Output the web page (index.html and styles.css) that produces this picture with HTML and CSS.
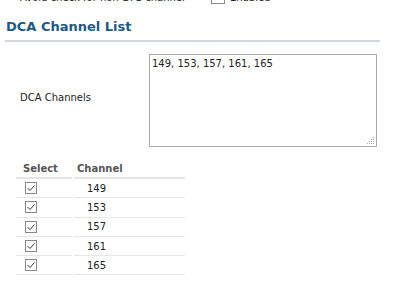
FILE: index.html
```html
<!DOCTYPE html>
<html lang="en">

<head>
    <meta charset="UTF-8">
    <meta name="viewport" content="width=device-width, initial-scale=1.0">
    <title>DCA Channel List</title>
    <link rel="stylesheet" href="styles.css">
</head>

<body>
    <div class="prev-row">
        <span class="prev-label">Avoid check for non-DFS channel</span>
        <label class="prev-check"><span class="box"></span>Enabled</label>
    </div>

    <h2 class="section-title">DCA Channel List</h2>

    <div class="form-row">
        <label class="form-label" for="dca-channels">DCA Channels</label>
        <textarea id="dca-channels" class="channels-input">149, 153, 157, 161, 165</textarea>
    </div>

    <table class="channel-table">
        <thead>
            <tr>
                <th class="col-select">Select</th>
                <th class="col-channel">Channel</th>
            </tr>
        </thead>
        <tbody>
            <tr>
                <td class="col-select"><svg class="check" viewBox="0 0 12 12"><rect x="0.5" y="0.5" width="11" height="11" fill="#fff" stroke="#888"/><path d="M2.5 6 L5 8.5 L9.5 3.5" fill="none" stroke="#333" stroke-width="1"/></svg></td>
                <td class="col-channel">149</td>
            </tr>
            <tr>
                <td class="col-select"><svg class="check" viewBox="0 0 12 12"><rect x="0.5" y="0.5" width="11" height="11" fill="#fff" stroke="#888"/><path d="M2.5 6 L5 8.5 L9.5 3.5" fill="none" stroke="#333" stroke-width="1"/></svg></td>
                <td class="col-channel">153</td>
            </tr>
            <tr>
                <td class="col-select"><svg class="check" viewBox="0 0 12 12"><rect x="0.5" y="0.5" width="11" height="11" fill="#fff" stroke="#888"/><path d="M2.5 6 L5 8.5 L9.5 3.5" fill="none" stroke="#333" stroke-width="1"/></svg></td>
                <td class="col-channel">157</td>
            </tr>
            <tr>
                <td class="col-select"><svg class="check" viewBox="0 0 12 12"><rect x="0.5" y="0.5" width="11" height="11" fill="#fff" stroke="#888"/><path d="M2.5 6 L5 8.5 L9.5 3.5" fill="none" stroke="#333" stroke-width="1"/></svg></td>
                <td class="col-channel">161</td>
            </tr>
            <tr>
                <td class="col-select"><svg class="check" viewBox="0 0 12 12"><rect x="0.5" y="0.5" width="11" height="11" fill="#fff" stroke="#888"/><path d="M2.5 6 L5 8.5 L9.5 3.5" fill="none" stroke="#333" stroke-width="1"/></svg></td>
                <td class="col-channel">165</td>
            </tr>
        </tbody>
    </table>
</body>

</html>
```

FILE: styles.css
```css
body {
    margin: 0;
    font-family: "DejaVu Sans", Verdana, sans-serif;
    font-size: 10px;
    color: #222;
    background-color: #fff;
}

.prev-row {
    display: flex;
    align-items: center;
    height: 14px;
    margin-top: -10px;
    padding-left: 20px;
}

.prev-label {
    width: 191px;
}

.prev-check {
    display: flex;
    align-items: center;
}

.prev-check .box {
    width: 12px;
    height: 11px;
    border: 1px solid #888;
    margin-right: 5px;
}

.section-title {
    margin: 15px 19px 0 5px;
    padding: 0 0 6px 1px;
    font-size: 13px;
    font-weight: bold;
    color: #1d5987;
    border-bottom: 2px solid #d3d7de;
}

.form-row {
    display: flex;
    align-items: center;
    margin-top: 12px;
    padding-left: 20px;
}

.form-label {
    width: 129px;
    margin-bottom: 7px;
}

.channels-input {
    box-sizing: border-box;
    width: 228px;
    height: 93px;
    margin: 0;
    padding: 3px 2px;
    border: 1px solid #a9a9a9;
    font-family: "DejaVu Sans", Verdana, sans-serif;
    font-size: 10px;
    color: #222;
    resize: none;
    background: #fff url("data:image/svg+xml,%3Csvg xmlns='http://www.w3.org/2000/svg' width='9' height='9'%3E%3Cg fill='%23aaa'%3E%3Crect x='7' y='1' width='1' height='1'/%3E%3Crect x='5' y='3' width='1' height='1'/%3E%3Crect x='7' y='3' width='1' height='1'/%3E%3Crect x='3' y='5' width='1' height='1'/%3E%3Crect x='5' y='5' width='1' height='1'/%3E%3Crect x='7' y='5' width='1' height='1'/%3E%3Crect x='1' y='7' width='1' height='1'/%3E%3Crect x='3' y='7' width='1' height='1'/%3E%3Crect x='5' y='7' width='1' height='1'/%3E%3Crect x='7' y='7' width='1' height='1'/%3E%3C/g%3E%3C/svg%3E") no-repeat right 1px bottom 1px;
}

.channel-table {
    margin: 13px 0 0 14px;
    border-spacing: 2px 0;
}

.channel-table th {
    height: 19px;
    padding: 0 0 0 7px;
    text-align: left;
    font-weight: bold;
    color: #555;
    border-bottom: 2px solid #e3e5e8;
}

.channel-table td {
    height: 19.3px;
    padding: 0;
    border-bottom: 1px solid #e6e6e6;
}

.channel-table .col-select {
    box-sizing: border-box;
    width: 56px;
}

.channel-table td.col-select {
    padding-left: 9px;
}

.channel-table .col-channel {
    box-sizing: border-box;
    width: 111px;
}

.channel-table th.col-channel {
    padding-left: 3px;
}

.channel-table td.col-channel {
    padding-left: 13px;
}

.check {
    display: block;
    width: 12px;
    height: 12px;
}
```
